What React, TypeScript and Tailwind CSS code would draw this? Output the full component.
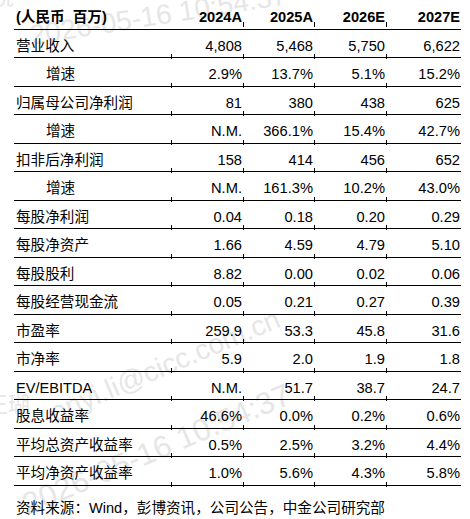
const rows: { label: string; values: string[]; indent?: boolean }[] = [
  { label: "营业收入", values: ["4,808", "5,468", "5,750", "6,622"] },
  { label: "增速", values: ["2.9%", "13.7%", "5.1%", "15.2%"], indent: true },
  { label: "归属母公司净利润", values: ["81", "380", "438", "625"] },
  { label: "增速", values: ["N.M.", "366.1%", "15.4%", "42.7%"], indent: true },
  { label: "扣非后净利润", values: ["158", "414", "456", "652"] },
  { label: "增速", values: ["N.M.", "161.3%", "10.2%", "43.0%"], indent: true },
  { label: "每股净利润", values: ["0.04", "0.18", "0.20", "0.29"] },
  { label: "每股净资产", values: ["1.66", "4.59", "4.79", "5.10"] },
  { label: "每股股利", values: ["8.82", "0.00", "0.02", "0.06"] },
  { label: "每股经营现金流", values: ["0.05", "0.21", "0.27", "0.39"] },
  { label: "市盈率", values: ["259.9", "53.3", "45.8", "31.6"] },
  { label: "市净率", values: ["5.9", "2.0", "1.9", "1.8"] },
  { label: "EV/EBITDA", values: ["N.M.", "51.7", "38.7", "24.7"] },
  { label: "股息收益率", values: ["46.6%", "0.0%", "0.2%", "0.6%"] },
  { label: "平均总资产收益率", values: ["0.5%", "2.5%", "3.2%", "4.4%"] },
  { label: "平均净资产收益率", values: ["1.0%", "5.6%", "4.3%", "5.8%"] },
];

const years = ["2024A", "2025A", "2026E", "2027E"];

// little notch where a column starts, sitting on the row rule
const Tick = () => (
  <span className="absolute left-0 -bottom-[2px] h-[5px] w-px bg-black" />
);

const App = () => {
  return (
    <div className="relative w-[470px] h-[519px] overflow-hidden bg-white text-black font-['Liberation_Sans','Noto_Sans_CJK_SC',sans-serif]">

      {/* 水印 */}
      <div className="pointer-events-none absolute inset-0 text-[#e6e6e6] text-[28px] leading-none whitespace-nowrap">
        <span className="absolute left-[-8px] top-[-14px] text-[22px]">晓</span>
        <span className="absolute left-[30px] top-[22px] origin-left -rotate-[9deg]">2026-05-16 10:54:37</span>
        <span className="absolute left-[-14px] top-[394px] text-[22px]">王瑚</span>
        <span className="absolute left-[52px] top-[400px] origin-left -rotate-[23deg]">anyi.li@cicc.com.cn</span>
        <span className="absolute left-[24px] top-[490px] origin-left -rotate-[23deg] text-[31px]">2026-05-16 10:54:37</span>
      </div>

      <div className="relative pl-[14px] pr-[9px]">
        {/* 表头 */}
        <div className="grid grid-cols-[157px_72px_71px_72px_75px] h-[29.5px] border-b-[1.5px] border-black items-end pb-[4px] leading-[15px] font-bold">
          <div className="pl-[2px] text-[14.6px]">(人民币&nbsp;&nbsp;百万)</div>
          {years.map((y, i) => (
            <div key={y} className="relative h-full flex items-end justify-end pr-px text-[14.6px]">
              {y}
              {i > 0 && <Tick />}
            </div>
          ))}
        </div>

        {rows.map((r, idx) => (
          <div
            key={idx}
            className="grid grid-cols-[157px_72px_71px_72px_75px] h-[28.5px] border-b-[1.5px] border-black leading-[15px]"
          >
            <div className={`flex items-end pb-[3.5px] text-[14.6px] ${r.indent ? "pl-[32px]" : "pl-[2px]"}`}>
              {r.label}
            </div>
            {r.values.map((v, i) => (
              <div key={i} className="relative flex items-end justify-end pb-[3.5px] pr-px text-[14.7px]">
                {v}
                <Tick />
              </div>
            ))}
          </div>
        ))}

        <div className="mt-[15px] pl-[2px] text-[14.6px] leading-[15px]">
          资料来源：Wind，彭博资讯，公司公告，中金公司研究部
        </div>
      </div>
    </div>
  );
};

export default App;
